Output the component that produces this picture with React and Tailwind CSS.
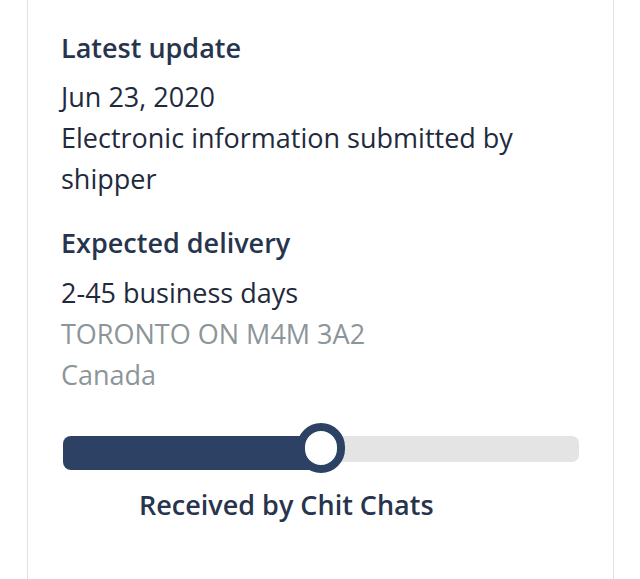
import React from 'react';

const font = { fontFamily: '"Open Sans", "Noto Sans", sans-serif' };

const ProgressBar = ({ percent }) => (
    <div className="relative h-[50px]">
        <div className="absolute left-0 right-0 top-[13px] h-[26px] rounded-[7px] bg-[#e4e4e4]"></div>
        <div
            className="absolute left-0 top-[13px] h-[34px] rounded-l-[8px] bg-[#2d4164]"
            style={{ width: `${percent}%` }}
        ></div>
        <div
            className="absolute top-0 w-[48px] h-[50px] -ml-[24px] rounded-full border-[8px] border-[#2d4164] bg-white"
            style={{ left: `${percent}%` }}
        ></div>
    </div>
);

export default function App() {
    return (
        <div className="min-h-[579px] bg-white" style={font}>
            <div className="ml-[27px] w-[587px] min-h-[579px] border-x border-[#e2e2e2] px-[33px] pt-[27px]">

                {/* LATEST UPDATE */}
                <h2 className="text-[27px] leading-[41px] font-semibold text-[#27344d]">
                    Latest update
                </h2>
                <div className="mt-[8px] text-[27px] leading-[41px] text-[#1f2a3d]">
                    <p>Jun 23, 2020</p>
                    <p className="pr-[20px]">Electronic information submitted by shipper</p>
                </div>

                {/* EXPECTED DELIVERY */}
                <h2 className="mt-[23px] text-[27px] leading-[41px] font-semibold text-[#27344d]">
                    Expected delivery
                </h2>
                <div className="mt-[9px] text-[27px] leading-[41px]">
                    <p className="text-[#1f2a3d]">2-45 business days</p>
                    <p className="text-[#8c9598]">TORONTO ON M4M 3A2</p>
                    <p className="text-[#8c9598]">Canada</p>
                </div>

                {/* PROGRESS */}
                <div className="mt-[28px] ml-[2px] w-[516px]">
                    <ProgressBar percent={50} />
                </div>
                <p className="mt-[11px] ml-[78px] text-[27px] leading-[41px] font-semibold text-[#27344d]">
                    Received by Chit Chats
                </p>
            </div>
        </div>
    );
}
